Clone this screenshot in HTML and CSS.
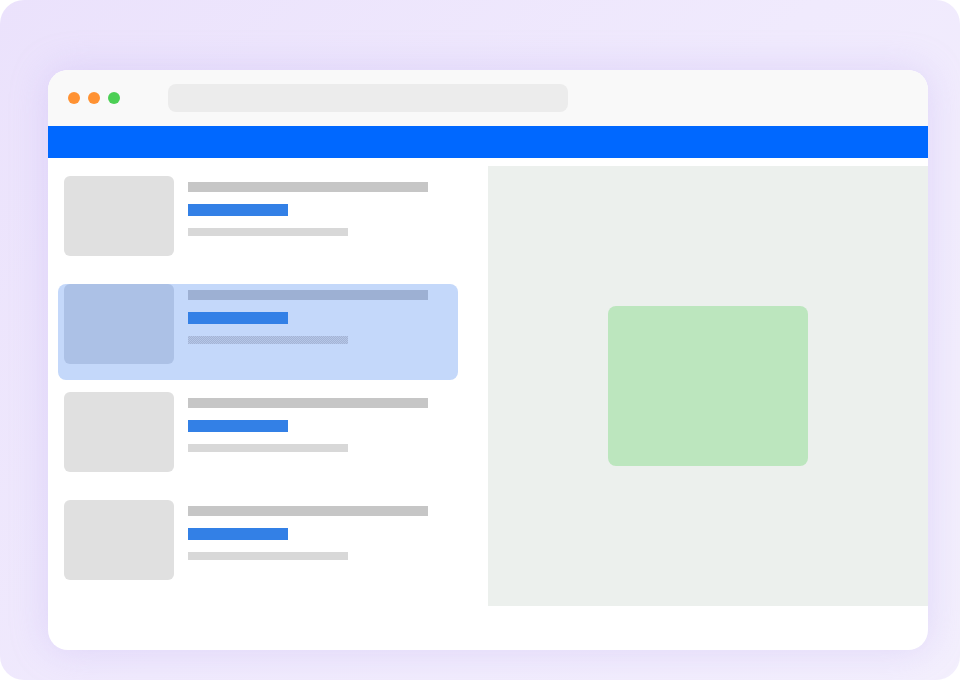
FILE: index.html
```html
<!DOCTYPE html>
<html lang="en">
<head>
  <meta charset="utf-8">
  <title>List and detail</title>
  <link rel="stylesheet" href="styles.css">
</head>
<body>
  <div class="stage">
    <div class="window">
      <!-- Title bar -->
      <div class="titlebar">
        <div class="dots">
          <span class="dot dot-orange"></span>
          <span class="dot dot-orange"></span>
          <span class="dot dot-green"></span>
        </div>
        <div class="address"></div>
      </div>
      <div class="nav"></div>

      <div class="content">
        <div class="list">
          <div class="item">
            <div class="thumb"></div>
            <div class="lines">
              <div class="line line-title"></div>
              <div class="line line-accent"></div>
              <div class="line line-sub"></div>
            </div>
          </div>
          <div class="item selected">
            <div class="thumb"></div>
            <div class="lines">
              <div class="line line-title"></div>
              <div class="line line-accent"></div>
              <div class="line line-sub"></div>
            </div>
          </div>
          <div class="item">
            <div class="thumb"></div>
            <div class="lines">
              <div class="line line-title"></div>
              <div class="line line-accent"></div>
              <div class="line line-sub"></div>
            </div>
          </div>
          <div class="item">
            <div class="thumb"></div>
            <div class="lines">
              <div class="line line-title"></div>
              <div class="line line-accent"></div>
              <div class="line line-sub"></div>
            </div>
          </div>
        </div>

        <div class="detail">
          <div class="preview"></div>
        </div>
      </div>
    </div>
  </div>
</body>
</html>
```

FILE: styles.css
```css
html, body {
  margin: 0;
  padding: 0;
  height: 100%;
  overflow: hidden;
}

body {
  font-family: 'Liberation Sans', Arial, sans-serif;
  background: #ffffff;
}

.stage {
  width: 960px;
  height: 680px;
  box-sizing: border-box;
  padding: 70px 32px 30px 48px;
  border-radius: 24px;
  background: linear-gradient(135deg, #ebe2fc 0%, #f0eafd 50%, #f3effd 100%);
}

/* Browser window */
.window {
  width: 880px;
  height: 580px;
  background: #ffffff;
  border-radius: 20px;
  overflow: hidden;
  box-shadow: 0 0 36px rgba(190, 170, 240, 0.35);
  display: flex;
  flex-direction: column;
}

.titlebar {
  height: 56px;
  flex-shrink: 0;
  background: #f9f9f9;
  display: flex;
  align-items: center;
  padding-left: 20px;
}

.dots {
  display: flex;
  gap: 8px;
  width: 100px;
}

.dot {
  width: 12px;
  height: 12px;
  border-radius: 50%;
}

.dot-orange { background: #ff9233; }
.dot-green { background: #4ccf55; }

.address {
  width: 400px;
  height: 28px;
  border-radius: 8px;
  background: #ececec;
}

.nav {
  height: 32px;
  flex-shrink: 0;
  background: #0068ff;
}

.content {
  flex: 1;
  display: flex;
}

/* List column */
.list {
  width: 440px;
  flex-shrink: 0;
  box-sizing: border-box;
  padding: 18px 0 0 16px;
  display: flex;
  flex-direction: column;
  gap: 28px;
}

.item {
  position: relative;
  height: 80px;
  display: flex;
  gap: 14px;
}

.thumb {
  position: relative;
  width: 110px;
  height: 80px;
  border-radius: 6px;
  background: #e0e0e0;
}

.lines {
  position: relative;
  padding-top: 6px;
  display: flex;
  flex-direction: column;
  gap: 12px;
}

.line-title {
  width: 240px;
  height: 10px;
  background: #c6c6c6;
}

.line-accent {
  width: 100px;
  height: 12px;
  background: #3380e6;
}

.line-sub {
  width: 160px;
  height: 8px;
  background: #d8d8d8;
}

/* Selected row */
.item.selected::before {
  content: '';
  position: absolute;
  left: -6px;
  top: 0;
  width: 400px;
  height: 96px;
  border-radius: 8px;
  background: #c4d8fa;
}

.selected .thumb { background: #acc1e6; }
.selected .line-title { background: #9db0d3; }
.selected .line-sub {
  background: repeating-conic-gradient(#a3b4d6 0 25%, #b6c6e6 0 50%) 0 0 / 2px 2px;
}

/* Detail panel */
.detail {
  width: 440px;
  height: 440px;
  flex-shrink: 0;
  margin-top: 8px;
  background: #ecf0ed;
  display: flex;
  align-items: center;
  justify-content: center;
}

.preview {
  width: 200px;
  height: 160px;
  border-radius: 8px;
  background: #bce6be;
}
```
